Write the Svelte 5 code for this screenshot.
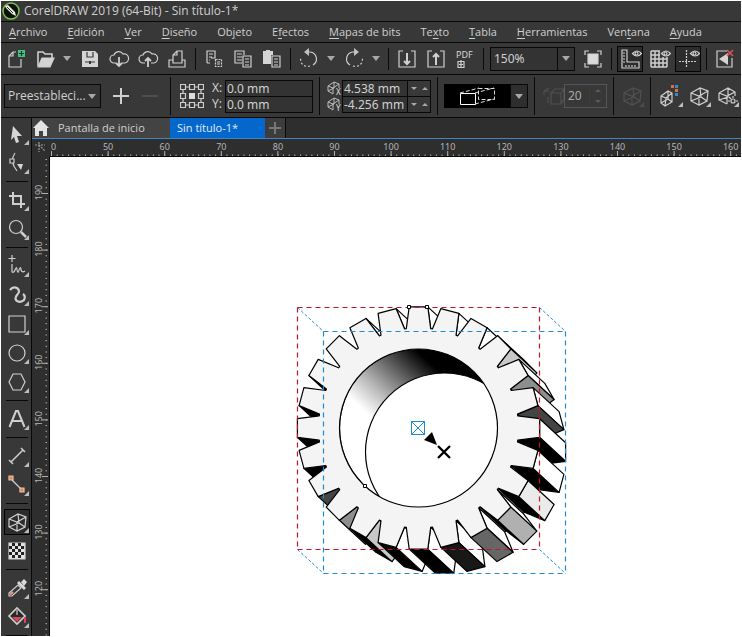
<script>
  const menus = [
    ['', 'A', 'rchivo'], ['', 'E', 'dición'], ['', 'V', 'er'], ['', 'D', 'iseño'],
    ['Ob', 'j', 'eto'], ['E', 'f', 'ectos'], ['', 'M', 'apas de bits'], ['Te', 'x', 'to'],
    ['', 'T', 'abla'], ['', 'H', 'erramientas'], ['Ven', 't', 'ana'], ['', 'A', 'yuda']
  ];

  // Icons share a 24x24 box and inherit a thin light stroke.
  const cube = '<path d="M4 9 13 4l8 3-1 10-8 4-8-4zM4 9l8 3 9-5M12 12v9M4 17l10-4 6 4M13 4l1 9" />';
  const smallCube = '<path d="M2 9 9 4l4 2v9l-7 4-4-3zM2 9l5 2 6-5M7 11l-1 8M2 16l7-4 4 3M9 4v8" />';
  const eye = '<path d="M14.500 6.500q4.500-5 9 0q-4.500 5-9 0z" fill="#2c2c2c"/><circle cx="18.500" cy="6.500" r="1.500"/>';
  const corner = '<path d="M24 18v5h-5z" fill="#bdbdbd" stroke="none"/>';
  const icons = {
    nuevo: '<path d="M12 5H9L5 9v11h12v-8M9 5v4H5"/><path d="M14 3h7v7h-7z" fill="#3fc380" stroke="none"/><path d="M17.500 4v5M15 6.500h5" stroke="#173523"/>',
    abrir: '<path d="M5 19V5h5l2 2h7v4" stroke-width="1.600"/><path d="M9 11h12l-4 9H5z" fill="#d4d4d4"/>',
    guardar: '<path d="M4 4h13l3 3v13H4z" fill="#d4d4d4" stroke="none"/><path d="M9 5v5h6V5M7 15h10" stroke="#383838"/><path d="M12 14v3" stroke="#383838" stroke-width="2"/>',
    bajar: '<path d="M9 16H7a4 4 0 0 1 0-8a5 5 0 0 1 9-1a4 4 0 0 1 2 9h-3"/><path d="M12 10v9M9 16l3 3 3-3" stroke-width="1.800"/>',
    subir: '<path d="M9 16H7a4 4 0 0 1 0-8a5 5 0 0 1 9-1a4 4 0 0 1 2 9h-3"/><path d="M12 20v-9M9 14l3-3 3 3" stroke-width="1.800"/>',
    imprimir: '<path d="M8 13H4v7h16v-7h-3M8 16V8l4-4h5v12zM12 4v4H8"/>',
    cortar: '<path d="M5 16V4h8v7H9M5 16h3M7 7h4M7 10h3M7 13h1"/><path d="M13.500 12.500h6v7h-6z" stroke-dasharray="2 1"/><path d="M15 15h3M15 17h3"/>',
    copiar: '<path d="M11 16H4V4h9v4M6 7h5M6 10h5M6 13h5"/><path d="M12 9h8v11h-8zM14 12h4M14 15h4M14 18h4"/>',
    pegar: '<path d="M3 4h3V3h4v1h3v4h-2v9H3z" fill="#d4d4d4" stroke="none"/><path d="M12 9h8v11h-8zM14 12h4M14 15h4M14 18h4"/>',
    deshacer: '<path d="M11 5h2a7 7 0 0 1 3 13"/><path d="M13 19a7 7 0 0 1-9-9" stroke-dasharray="2 2"/><path d="M12 1v8L7 5z" fill="#c0c0c0" stroke="none"/>',
    rehacer: '<path d="M13 5h-2a7 7 0 0 0-3 13"/><path d="M11 19a7 7 0 0 0 9-9" stroke-dasharray="2 2"/><path d="M12 1v8l5-4z" fill="#c0c0c0" stroke="none"/>',
    importar: '<path d="M8 4H4v16h16V4h-4" stroke-width="1.200"/><path d="M12 6v11M9 14l3 3 3-3" stroke-width="2"/>',
    exportar: '<path d="M8 4H4v16h16V4h-4" stroke-width="1.200"/><path d="M12 18V7M9 10l3-3 3 3" stroke-width="2"/>',
    pdf: '<text x="3" y="11" font-size="9" fill="#d8d8d8" stroke="none">PDF</text><path d="M8 16v-3M5 14.500h6v6H5zM6 17.500h4M8 15v5"/>',
    completa: '<path d="M4 8V4h4M16 4h4v4M4 16v4h4M16 20h4v-4"/><path d="M7 7h10v10H7z" fill="#dadada"/>',
    reglas: '<path d="M4 3h5v12h12v6H4zM5 6h2M5 9h2M5 12h2M5 15h2M8 18v2M11 18v2M14 18v2M17 18v2"/>' + eye,
    cuadricula: '<path d="M4 4h9M4 8h9M4 12h16M4 16h16M4 20h16M4 4v16M8 4v16M12 4v16M16 10v10M20 10v10" stroke-width="1.500"/>' + eye,
    guias: '<path d="M10.500 3v18M3 14.500h18" stroke-dasharray="2 1"/>' + eye,
    ajustar: '<path d="M14 4H4v16h15v-9"/><path d="M6 12l9-6v12z" fill="#d4d4d4" stroke="none"/><path d="M14 3l6 6M20 3l-6 6" stroke="#d4545c" stroke-width="1.600"/>',
    puntero: '<path d="M8 4l9 10-5 0 2 6-3 1-2-6-3 3z" fill="#d6d6d6" stroke="none"/>' + corner,
    forma: '<path d="M10 2Q4 10 12 20"/><path d="M5 8h4v4H5z" fill="#303030"/><path d="M12 13l6 0-2 6z" fill="#d6d6d6" stroke="none"/>' + corner,
    recortar: '<path d="M4 8h12v12M8 4v12h12" stroke-width="2"/>' + corner,
    lupa: '<circle cx="11" cy="10" r="6.500"/><path d="M16 15l5 5" stroke-width="2.500"/>' + corner,
    manoalzada: '<path d="M7 1v7M3.500 4.500h7M7 10v8q2 1 3-2q2-5 2 0q1 5 2 0q2-5 2 0q1 3 4 1"/>' + corner,
    artistico: '<path d="M5 7q3-4 7-2q4 3 0 7q-3 4 0 6q4 2 7-1q2-4-1-6" stroke-width="2.200"/>' + corner,
    rectangulo: '<path d="M4 4h16v16H4z"/>' + corner,
    elipse: '<circle cx="12" cy="12" r="8"/>' + corner,
    poligono: '<path d="M8 4h8l4 8-4 8H8l-4-8z"/>' + corner,
    texto: '<path d="M4.500 20 11 4h2l6.500 16M7 14h10" stroke-width="2"/>' + corner,
    linea: '<path d="M6 18 18 6M4 16l4 4M16 4l4 4" stroke-width="1.500"/>' + corner,
    conector: '<path d="M7 7l10 10"/><path d="M4 3h4v4H4zM15 15h4v4h-4z" fill="#df8a5e" stroke="#f0c0a0"/>' + corner,
    extrusion: cube + corner,
    transparencia: '<path d="M4 4h16v16H4z" fill="#e4e4e4"/><path d="M7 4h3v3H7zM13 4h3v3h-3zM4 7h3v3H4zM10 7h3v3h-3zM16 7h3v3h-3zM7 10h3v3H7zM13 10h3v3h-3zM4 13h3v3H4zM10 13h3v3h-3zM16 13h3v3h-3zM7 16h3v3H7zM13 16h3v3h-3z" fill="#222" stroke="none"/>',
    cuentagotas: '<path d="M13 9l3 3-9 8H4v-3z"/><path d="M7 15l2 2-3 2H5v-2z" fill="#ea946e" stroke="none"/><path d="M12 7l2-2 7 7-2 2zM16 6l3-3 3 3-3 4z" fill="#dadada" stroke="none"/>' + corner,
    relleno: '<path d="M4 11l8-8 8 8-8 8z" fill="#292929" stroke-width="1.700"/><path d="M7 12h10l-5 5z" fill="#d84557" stroke="none"/><path d="M12 5v5"/><path d="M20 12v6" stroke="#d84557" stroke-width="2"/>' + corner,
    mas: '<path d="M4 12h16M12 4v16" stroke-width="2"/>',
    menos: '<path d="M4 12h16" stroke="#4e4e4e" stroke-width="2"/>',
    origen: '<path d="M.500 .500h5v5h-5zM9.500 .500h5v5h-5zM18.500 .500h5v5h-5zM.500 9.500h5v5h-5zM18.500 9.500h5v5h-5zM.500 18.500h5v5h-5zM9.500 18.500h5v5h-5zM18.500 18.500h5v5h-5zM6 3h3M15 3h3M6 21h3M15 21h3M3 6v3M3 15v3M21 6v3M21 15v3"/><path d="M9 9h6v6H9z" fill="#ddd" stroke="none"/>',
    profundidad: '<path d="M10 9h10v11H10zM10 9l4-4h9v10l-3 5M20 9l3-4M3 7l5-3M3 7v4M3 7h5M7 13v6"/>',
    cubo: cube + corner,
    color: '<g transform="translate(0 3)">' + smallCube + '</g><path d="M12 1h3v3h-3zM16 5h3v3h-3z" fill="#db7136" stroke="none"/><path d="M16 1h3v3h-3zM16 9h3v3h-3z" fill="#338bd0" stroke="none"/>' + corner,
    bisel: cube + corner,
    luz: '<path d="M4 9 13 4l7 4v4M4 9v7l8 4M4 9l8 3 8-4M12 12v8M4 16l9-3V4"/><circle cx="18" cy="17" r="2"/><path d="M18 12v2M13 17h2M14 13l2 2M21 17h2"/>' + corner
  };

  const tools = [
    ['puntero', 'forma'], ['recortar', 'lupa'],
    ['manoalzada', 'artistico', 'rectangulo', 'elipse', 'poligono'],
    ['texto'], ['linea', 'conector'], ['extrusion', 'transparencia'], ['cuentagotas', 'relleno']
  ];

  // Rulers: ten millimetres take 56.6 units, with one small mark per millimetre.
  const step = 56.6;
  let sheetWidth = $state(700);
  let sheetHeight = $state(490);
  const across = $derived(Array.from({ length: Math.ceil((sheetWidth - 19) / step) }, (_, i) => ({ at: 1.5 + i * step, label: 40 + i * 10 })));
  const down = $derived(Array.from({ length: Math.ceil((sheetHeight - 54) / step) }, (_, i) => ({ at: 36.5 + i * step, label: 190 - i * 10 })));
  const minor = Array.from({ length: 10 }, (_, i) => i * step / 10);

  // Gear: 24 teeth, extruded by (dx, dy).
  const cx = 368.5, cy = 271, dx = 26, dy = 24;
  const at = (deg, r) => {
    const a = deg * Math.PI / 180;
    return [cx + r * Math.cos(a), cy + r * Math.sin(a)];
  };
  const outline = [];
  for (let i = 0; i < 24; i++) {
    const a = i * 15;
    outline.push(at(a - 4.4, 121.5), at(a + 4.4, 121.5), at(a + 7, 100), at(a + 8, 100));
  }
  const shades = [[27, '#fff'], [33, '#ebebeb'], [42, '#c8c8c8'], [48, '#b0b0b0'], [56, '#8e8e8e'], [63, '#666'], [71, '#444'], [78, '#181818'], [999, '#000']];
  const faces = outline
    .map((p, i) => {
      const q = outline[(i + 1) % outline.length];
      const nx = q[1] - p[1], ny = p[0] - q[0];
      const angle = Math.atan2(ny, nx) * 180 / Math.PI;
      return {
        facing: nx * dx + ny * dy,
        order: (p[0] + q[0]) * dx + (p[1] + q[1]) * dy,
        fill: shades.find(([limit]) => angle < limit)[1],
        points: [p, q, [q[0] + dx, q[1] + dy], [p[0] + dx, p[1] + dy]].map((v) => v.map((n) => n.toFixed(1)).join()).join(' ')
      };
    })
    .filter((f) => f.facing > 0)
    .sort((a, b) => a.order - b.order);
  const front = outline.map((v) => v.map((n) => n.toFixed(1)).join()).join(' ');

  let zoom = $state('150%');
  let preset = $state('Preestableci...');
</script>

{#snippet icon(name)}
  <svg class="icon" viewBox="0 0 24 24" aria-hidden="true">{@html icons[name]}</svg>
{/snippet}

{#snippet tool(name, on = false)}
  <button class="tool" class:on aria-label={name}>{@render icon(name)}</button>
{/snippet}

{#snippet caret(name)}
  <button class="caret" aria-label={name}><i class="tri"></i></button>
{/snippet}

<div class="app">
  <header class="title">
    <svg class="logo" viewBox="0 0 18 18" aria-hidden="true">
      <circle cx="9" cy="9" r="8" fill="#0c120b" stroke="#7cc24a" stroke-width="1.500" />
      <path d="M3 4l3-1 7 7 1 4-4-2-6-6z" fill="#e9efdf" /><path d="M5 5l6 6" stroke="#29321f" />
    </svg>
    <span>CorelDRAW 2019 (64-Bit) - Sin título-1*</span>
  </header>

  <nav class="menu">
    {#each menus as [a, key, b]}<button>{a}<u>{key}</u>{b}</button>{/each}
  </nav>

  <div class="bar">
    {@render tool('nuevo')}{@render tool('abrir')}{@render caret('recientes')}
    {@render tool('guardar')}{@render tool('bajar')}{@render tool('subir')}{@render tool('imprimir')}
    <i class="sep"></i>
    {@render tool('cortar')}{@render tool('copiar')}{@render tool('pegar')}
    <i class="sep"></i>
    {@render tool('deshacer')}{@render caret('lista deshacer')}
    {@render tool('rehacer')}{@render caret('lista rehacer')}
    <i class="sep"></i>
    {@render tool('importar')}{@render tool('exportar')}{@render tool('pdf')}
    <i class="sep"></i>
    <div class="combo zoom">
      <select aria-label="Zoom" bind:value={zoom}><option>150%</option><option>100%</option></select>
      <span class="drop"><i class="tri"></i></span>
    </div>
    {@render tool('completa')}
    <i class="sep"></i>
    {@render tool('reglas', true)}{@render tool('cuadricula')}{@render tool('guias', true)}
    <i class="sep"></i>
    {@render tool('ajustar')}
  </div>

  <div class="props">
    <div class="combo preset">
      <select aria-label="Preestablecidos" bind:value={preset}><option>Preestableci...</option></select>
      <span class="drop plain"><i class="tri"></i></span>
    </div>
    {@render tool('mas')}{@render tool('menos')}
    <i class="sep wide"></i>
    <span class="origin">{@render icon('origen')}</span>
    <div class="pair pos">
      <label for="x">X:</label><input id="x" value="0.0 mm" />
      <label for="y">Y:</label><input id="y" value="0.0 mm" />
    </div>
    <i class="sep wide"></i>
    <div class="pair vanish">
      {#each [['X', '4.538 mm'], ['Y', '-4.256 mm']] as [axis, value]}
        <label for={'v' + axis} aria-label={'Punto de fuga ' + axis}>
          <svg viewBox="0 0 16 16" aria-hidden="true">
            <path d="M2 6 8 2l5 2v4M2 6v5l5 3M2 6l5 2 6-4M7 8v6M8 2v6l-6 3" fill="none" stroke="#bbb" />
            <text x="10" y="15" font-size="8" fill="#e0e0e0">{axis}</text>
          </svg>
        </label>
        <input id={'v' + axis} {value} />
        <span class="spin"><button aria-label="Bajar"><i class="tri small"></i></button><button aria-label="Subir"><i class="tri small up"></i></button></span>
      {/each}
    </div>
    <i class="sep wide"></i>
    <button class="type" aria-label="Tipo de extrusión">
      <svg viewBox="0 0 66 24" aria-hidden="true">
        <path d="M16.500 9.500h15v11h-15z" fill="none" stroke="#fff" />
        <path d="M34.500 4.500h16v11h-16zM16 9l19-5M31 9l19-5M31 20l19-5" fill="none" stroke="#ddd" stroke-dasharray="4 2" />
      </svg>
      <span class="drop"><i class="tri"></i></span>
    </button>
    <i class="sep wide"></i>
    <label class="off depthicon" for="depth" aria-label="Profundidad">{@render icon('profundidad')}</label>
    <div class="depth"><input id="depth" value="20" disabled /><span><i class="tri small up"></i><i class="tri small"></i></span></div>
    <i class="sep wide"></i>
    <button class="tool off narrow" aria-label="Rotación" disabled>{@render icon('cubo')}</button>
    <i class="sep wide"></i>
    <div class="effects">{@render tool('color')}{@render tool('bisel')}{@render tool('luz')}</div>
  </div>

  <div class="work">
    <aside>
      {#each tools as group}
        {#each group as name}{@render tool(name, name === 'extrusion')}{/each}
        <i class="line"></i>
      {/each}
    </aside>
    <main>
      <div class="tabs">
        <button class="tab home">
          <svg viewBox="0 0 16 16" aria-hidden="true"><path d="M8 0 16 8h-2v8h-4v-5H6v5H2V8H0z" fill="#e4e4e4" /></svg>
          Pantalla de inicio
        </button>
        <button class="tab current">Sin título-1*</button>
        <button class="tab add" aria-label="Nuevo documento"><svg viewBox="0 0 12 12" aria-hidden="true"><path d="M6 0v12M0 6h12" stroke="#777" stroke-width="2" /></svg></button>
      </div>
      <div class="sheet" bind:clientWidth={sheetWidth} bind:clientHeight={sheetHeight}>
        <div class="cross"><svg viewBox="0 0 16 18" aria-hidden="true"><path d="M6 3v10M2 6h10M6 6l6 6" fill="none" stroke="#999" stroke-width="1.200" stroke-dasharray="2 1" /></svg></div>
        <svg class="ruler h">
          {#each across as { at, label }, i}
            {#if i}<text x={at} y="11" text-anchor="middle">{label}</text>{:else}<text x="1" y="11">0</text>{/if}
            <path d="M{at} 12v6" />
            {#each minor as m}<path d="M{at + m} 15.500v1.500" />{/each}
          {/each}
        </svg>
        <svg class="ruler v">
          {#each down as { at, label }}
            <text transform="translate(10 {at - 1}) rotate(-90)" text-anchor="middle">{label}</text>
            <path d="M10 {at}h6" />
            {#each minor as m}<path d="M13.500 {at + m}h1.500" />{/each}
          {/each}
          {#each minor.slice(0, 6) as m}<path d="M13.500 {30.8 - m}h1.500" />{/each}
        </svg>
        <svg class="canvas" role="img" aria-label="Engranaje extruido">
          <defs>
            <linearGradient id="bore" gradientUnits="userSpaceOnUse" x1="300" y1="241" x2="355" y2="182">
              <stop offset="0" stop-color="#fff" /><stop offset=".3" stop-color="#bbb" /><stop offset=".65" stop-color="#606060" /><stop offset="1" stop-color="#000" />
            </linearGradient>
            <clipPath id="hole"><circle {cx} {cy} r="79" /></clipPath>
          </defs>
          <g stroke="#000" stroke-width="1.200" stroke-linejoin="round">
            {#each faces as f}<polygon points={f.points} fill={f.fill} />{/each}
            <polygon points={front} fill="#f4f4f4" />
            <g clip-path="url(#hole)">
              <circle {cx} {cy} r="79" fill="url(#bore)" />
              <circle cx={cx + dx} cy={cy + dy} r="79" fill="#fff" />
            </g>
            <circle {cx} {cy} r="79" fill="none" />
          </g>
          <g fill="none" stroke-width="1.200" stroke-dasharray="5 4">
            <path d="M247.500 150.500h242M489.500 150.500v242M247.500 392.500h242M247.500 150.500v242" stroke="#c4122f" />
            <path d="M273.500 174.500h242M515.500 174.500v242M273.500 416.500h242M273.500 174.500v242" stroke="#1e8ad6" />
            <path d="M247.500 150.500l26 24M489.500 150.500l26 24M247.500 392.500l26 24M489.500 392.500l26 24" stroke="#1e8ad6" stroke-width="1" stroke-dasharray="3 2" />
          </g>
          <path d="M361.500 264.500h13v13h-13zM361.500 264.500l13 13M374.500 264.500l-13 13" fill="#fff" stroke="#1e8ad6" />
          <path d="M374 283 382 275 387 288z" fill="#000" />
          <path d="M388 289l12 12M400 289l-12 12" stroke="#000" stroke-width="2.400" />
          <path d="M357.500 148.500h3v3h-3zM375.500 148.500h3v3h-3zM313.500 327.500h3v3h-3z" fill="#fff" stroke="#000" />
        </svg>
      </div>
    </main>
  </div>
</div>

<style>
  :global(body) { margin: 0; background: #fff; }
  .app {
    box-sizing: border-box; height: 100vh; padding: 1px; display: flex; flex-direction: column; overflow: hidden;
    font: 12px/16px "Noto Sans", "Open Sans", sans-serif; color: #d0d0d0;
  }
  button, input, select { font: inherit; color: inherit; border: 0; padding: 0; margin: 0; background: none; border-radius: 0; }
  .icon { display: block; width: 24px; height: 24px; fill: none; stroke: #cfcfcf; stroke-width: 1.2; flex: none; }
  .title, .menu, .bar, .props { background: #383838; border-bottom: 1px solid #080808; display: flex; align-items: center; flex: none; }
  .bar > *, .props > * { flex: none; }
  .title { height: 20px; gap: 4px; padding-left: 1px; font-family: "Open Sans", sans-serif; }
  .logo { width: 18px; height: 18px; }
  .menu { height: 20px; padding-left: 8px; gap: 20px; font-family: "Open Sans", sans-serif; font-size: 11px; }
  .menu button { white-space: nowrap; }
  u { text-underline-offset: 2px; }
  .bar { height: 31px; }
  .props { height: 42px; }
  .tool { width: 29px; height: 29px; flex: none; display: grid; place-items: center; }
  .on .icon { background: #2c2c2c; outline: 1px solid #050505; }
  .caret { width: 16px; height: 24px; display: grid; place-items: center; }
  .tri { width: 0; height: 0; border: 4px solid transparent; border-top: 5px solid #a8a8a8; border-bottom: 0; }
  .tri.small { border-width: 3px; border-top-width: 3px; border-bottom: 0; }
  .tri.small.up { border-top: 0; border-bottom: 3px solid #a8a8a8; }
  .sep { width: 8px; height: 22px; background: linear-gradient(#0a0a0a, #0a0a0a) center / 1px 100% no-repeat; }
  .sep.wide { width: 13px; height: 38px; }
  .combo { box-sizing: border-box; display: grid; grid-template-columns: 1fr 17px; height: 24px; border: 1px solid #080808; background: #333; margin: 0 3px; }
  .combo select { appearance: none; outline: 0; grid-area: 1 / 1 / 2 / 3; padding-left: 3px; width: 100%; }
  .drop { display: grid; place-items: center; border-left: 1px solid #080808; pointer-events: none; }
  .combo .drop { grid-area: 1 / 2; }
  .drop.plain { border: 0; }
  .zoom { width: 85px; }
  .preset { width: 97px; margin-right: 5px; font-family: "Open Sans", sans-serif; }
  .preset select { padding-left: 3px; }
  .origin { padding: 0 8px 0 3px; }
  .pair { display: grid; grid-template-rows: 16px 16px; align-items: stretch; }
  .pos { grid-template-columns: 13px 88px; }
  .pair input { box-sizing: border-box; width: 100%; min-width: 0; height: 17px; padding: 0 1px; border: 1px solid #080808; background: #333; }
  .vanish { grid-template-columns: 16px 66px 23px; }
  .vanish svg { width: 16px; height: 16px; display: block; }
  .spin { box-sizing: border-box; display: flex; height: 17px; border: 1px solid #080808; border-left: 0; }
  .spin button { flex: 1; display: grid; place-items: center; }
  .type { display: grid; grid-template-columns: 66px 18px; height: 24px; background: #000; }
  .type svg { width: 66px; height: 24px; }
  .type .drop { background: #2e2e2e; border: 1px solid #080808; }
  .off { opacity: .16; }
  .depthicon { width: 23px; }
  .depth { display: grid; grid-template-columns: 24px 17px; box-sizing: border-box; width: 43px; height: 24px; border: 1px solid #555; }
  .depth input { width: 100%; box-sizing: border-box; padding-left: 3px; color: #aaa; }
  .depth span { display: flex; flex-direction: column; justify-content: space-around; align-items: center; border-left: 1px solid #4a4a4a; opacity: .3; }
  .narrow { width: 24px; }
  .effects { display: flex; }
  .effects .tool { width: 28px; }
  .work { flex: 1; min-height: 0; display: flex; }
  aside { width: 31px; flex: none; box-sizing: border-box; padding: 1px 0 0 1px; background: #383838; border-right: 1px solid #080808; overflow: hidden; display: flex; flex-direction: column; align-items: center; }
  .line { width: 22px; height: 8px; flex: none; background: linear-gradient(#080808, #080808) center / 100% 1px no-repeat; }
  main { flex: 1; min-width: 0; display: flex; flex-direction: column; background: #2e2e2e; }
  .tabs { display: flex; height: 20px; border-bottom: 1px solid #3d86c6; font-family: "Open Sans", sans-serif; font-size: 11px; }
  .tab { display: flex; align-items: center; white-space: nowrap; }
  .home { width: 138px; gap: 9px; padding-left: 1px; background: #434343; }
  .home svg { width: 16px; height: 16px; }
  .current { width: 95px; padding-left: 7px; background: #0467cb; color: #e0ecfa; }
  .add { width: 21px; justify-content: center; background: #3d3d3d; border-right: 1px solid #080808; }
  .add svg { width: 12px; height: 12px; }
  .sheet { flex: 1; min-height: 0; display: grid; grid-template: 18px 1fr / 18px 1fr; }
  .cross svg { width: 16px; height: 18px; display: block; margin-left: 1px; }
  .ruler { width: 100%; height: 100%; display: block; overflow: hidden; fill: #b5b5b5; stroke: #b0b0b0; stroke-width: 1; min-height: 0; min-width: 0; }
  .ruler text { stroke: none; font: 9px "Noto Sans", sans-serif; }
  .h { border-bottom: 1px solid #080808; box-sizing: border-box; }
  .v { border-right: 1px solid #080808; box-sizing: border-box; }
  .canvas { width: 100%; height: 100%; display: block; background: #fff; min-height: 0; }
</style>
